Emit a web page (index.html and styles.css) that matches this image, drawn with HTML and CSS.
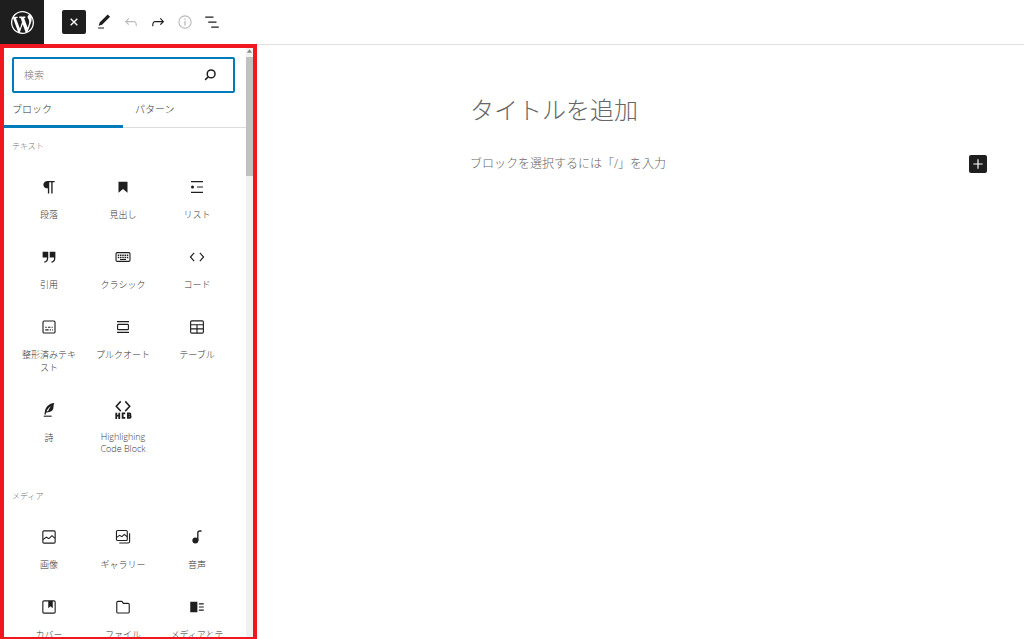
FILE: index.html
```html
<!DOCTYPE html>
<html lang="ja">
<head>
<meta charset="utf-8">
<title>投稿を編集</title>
<link rel="stylesheet" href="styles.css">
</head>
<body>
<header class="topbar">
  <a class="logo" href="#" aria-label="WordPress">
    <svg viewBox="0 0 20 20"><path d="M20 10c0-5.51-4.49-10-10-10C4.48 0 0 4.49 0 10c0 5.52 4.48 10 10 10 5.51 0 10-4.48 10-10zM7.78 15.37L4.37 6.22c.55-.02 1.17-.08 1.17-.08.5-.06.44-1.13-.06-1.11 0 0-1.45.11-2.37.11-.18 0-.37 0-.58-.01C4.12 2.69 6.87 1.11 10 1.11c2.33 0 4.45.87 6.05 2.34-.68-.11-1.65.39-1.65 1.58 0 .74.45 1.36.9 2.1.35.61.55 1.36.55 2.46 0 1.49-1.4 5-1.4 5l-3.03-8.37c.54-.02.82-.17.82-.17.5-.05.44-1.25-.06-1.22 0 0-1.44.12-2.38.12-.87 0-2.33-.12-2.33-.12-.5-.03-.56 1.2-.06 1.22l.92.08 1.26 3.41zM17.41 10c.24-.64.74-1.87.43-4.25.7 1.29 1.05 2.71 1.05 4.25 0 3.29-1.73 6.24-4.4 7.78.97-2.59 1.94-5.2 2.92-7.78zM6.1 18.09C3.12 16.65 1.11 13.53 1.11 10c0-1.3.23-2.48.72-3.59C3.25 10.3 4.67 14.2 6.1 18.09zm4.03-6.63l2.58 6.98c-.86.29-1.76.45-2.71.45-.79 0-1.57-.11-2.29-.33.81-2.38 1.62-4.74 2.42-7.1z"/></svg>
  </a>
  <div class="tools">
    <button class="tool close" aria-label="閉じる"><svg viewBox="0 0 24 24"><path class="line heavy" d="M7 7l10 10M17 7L7 17"/></svg></button>
    <button class="tool" aria-label="ツール"><svg viewBox="0 0 24 24"><path d="M20.100 5.100L16.900 2 6.200 12.700l-1.300 4.400 4.500-1.300L20.100 5.100zM4 20.800h8v-1.500H4v1.500z"/></svg></button>
    <button class="tool off" aria-label="元に戻す" disabled><svg viewBox="0 0 24 24"><path d="M18.300 11.700c-.6-.6-1.400-.9-2.300-.9H6.700l2.900-3.300-1.100-1-4.500 5L8.500 16l1-1-2.700-2.700H16c.5 0 .9.2 1.300.5 1 1 1 3.400 1 4.500v.3h1.500v-.2c0-1.500 0-4.300-1.500-5.700z"/></svg></button>
    <button class="tool" aria-label="やり直す"><svg viewBox="0 0 24 24"><path d="M15.600 6.500l-1.100 1 2.900 3.300H8c-.9 0-1.700.3-2.300.9-1.400 1.500-1.400 4.200-1.400 5.600v.2h1.500v-.3c0-1.100 0-3.500 1-4.500.3-.3.7-.5 1.300-.5h9.200L14.500 15l1.100 1.100 4.600-4.600-4.600-5z"/></svg></button>
    <button class="tool off" aria-label="詳細" disabled><svg viewBox="0 0 24 24"><circle class="line" cx="12" cy="12" r="8.200"/><path d="M11.100 7.300h1.800V9h-1.800zM11.100 10.700h1.800v6h-1.800z"/></svg></button>
    <button class="tool" aria-label="リスト表示"><svg viewBox="0 0 24 24"><path d="M3 4.500h11v1.700H3zM7 11.200h11v1.700H7zM11 17.900h10v1.700H11z"/></svg></button>
  </div>
</header>

<div class="workspace">
  <aside class="inserter">
    <div class="scroll">
      <div class="search">
        <input id="search" type="text" aria-label="検索" placeholder="検索" autofocus>
        <svg viewBox="0 0 24 24"><circle class="line heavy" cx="13.500" cy="10.500" r="5.200"/><path class="line heavy" d="M9.700 14.300L5.500 18.500"/></svg>
      </div>
      <div class="tabs" role="tablist">
        <button class="tab active" role="tab" aria-selected="true">ブロック</button>
        <button class="tab" role="tab" aria-selected="false">パターン</button>
      </div>

      <h2 class="group">テキスト</h2>
      <div class="blocks">
        <button class="block"><svg viewBox="0 0 24 24"><path d="M10.200 4C7 4 4.500 6 4.500 8.900s2.500 4.900 5.700 4.900h.3V20.500h1.800V5.500h2.700v15h1.800v-15H19.500V4z"/></svg><span>段落</span></button>
        <button class="block"><svg viewBox="0 0 24 24"><path d="M6 5v14.500l6-5 6 5V5z"/></svg><span>見出し</span></button>
        <button class="block"><svg viewBox="0 0 24 24"><path d="M4 4h16v1.600H4zM12 11.200h8v1.600h-8zM4 18.400h16V20H4z"/><circle cx="6" cy="12" r="2"/></svg><span>リスト</span></button>
        <button class="block"><svg viewBox="0 0 24 24"><path d="M3.500 5H11v8c0 4-1.700 6.200-5.300 6.700v-1.700c2.400-.5 3.600-2.200 3.600-5.500H3.500zM13 5h7.500v8c0 4-1.700 6.200-5.300 6.700v-1.700c2.400-.5 3.600-2.200 3.600-5.500H13z"/></svg><span>引用</span></button>
        <button class="block"><svg viewBox="0 0 24 24"><rect class="line" x="2.700" y="6.200" width="18.600" height="11.600" rx="1.500"/><path d="M5 8.500h2v2H5zM8 8.500h2v2H8zM11 8.500h2v2h-2zM14 8.500h2v2h-2zM17 8.500h2v2h-2zM5 11.500h2v2H5zM8 11.500h2v2H8zM11 11.500h2v2h-2zM14 11.500h2v2h-2zM17 11.500h2v2h-2zM8 14.500h8V16H8z"/></svg><span>クラシック</span></button>
        <button class="block"><svg viewBox="0 0 24 24"><path class="line" d="M8.200 6.500L3.200 12l5 5.500M15.800 6.500l5 5.500-5 5.500"/></svg><span>コード</span></button>
        <button class="block"><svg viewBox="0 0 24 24"><rect class="line" x="4" y="4" width="16" height="16" rx="1.500"/><path d="M7 11.500h2V13H7zM10.500 11.500H14V13h-3.500zM15.500 11.500H17V13h-1.500zM7 15h4.500v1.500H7zM13 15h1.500v1.500H13zM16 15h1v1.500h-1z"/></svg><span>整形済みテキスト</span></button>
        <button class="block"><svg viewBox="0 0 24 24"><path d="M4 4h16v1.600H4zM4 18.400h16V20H4z"/><rect class="line" x="4.800" y="8.500" width="14.400" height="7" rx="1"/></svg><span>プルクオート</span></button>
        <button class="block"><svg viewBox="0 0 24 24"><rect class="line" x="3.500" y="3.800" width="17" height="16.400" rx="1.500"/><path class="line" d="M4 9h16M4 14.500h16M12 9v11"/></svg><span>テーブル</span></button>
        <button class="block"><svg viewBox="0 0 24 24"><path d="M19 2.500C12 3 7.200 7.500 6.400 15l-.6 3h1.800l.7-2.700c5.700.2 8.800-1.800 9.500-5.500.3-2.100.2-4.800 1.200-7.300zM8.800 13.600c1.200-2.700 3-5 5.700-6.700-1.800 2.300-3 4.400-3.800 6.700z"/><path d="M5 19.500h10.500V21H5z"/></svg><span>詩</span></button>
        <button class="block latin"><svg viewBox="0 0 24 24"><path class="line heavy" d="M9 .5L3 7l6 6.500M15 .5L21 7l-6 6.500"/><path class="line bold" d="M3 15.500V24M7 15.500V24M3 19.500h4M15 16.500h-3.500v6H15M18.500 16.500h2.300c1.500 0 1.500 3 0 3h-2.300 2.500c1.700 0 1.700 3 0 3h-2.500z"/></svg><span>Highlighing Code Block</span></button>
      </div>

      <h2 class="group">メディア</h2>
      <div class="blocks">
        <button class="block"><svg viewBox="0 0 24 24"><rect class="line" x="3.800" y="3.800" width="16.400" height="16.400" rx="1.500"/><path class="line" d="M4 15.500l4.500-3.300 3.300 2 4.200-4 4 3.600"/></svg><span>画像</span></button>
        <button class="block"><svg viewBox="0 0 24 24"><rect class="line" x="3.300" y="3.300" width="14.400" height="13.400" rx="1.500"/><path class="line" d="M3.500 12.500l4-2.700 3 1.700 3.200-3 4 3.200M20.800 7v11c0 1.300-.7 2-2 2H7"/></svg><span>ギャラリー</span></button>
        <button class="block"><svg viewBox="0 0 24 24"><circle cx="9.800" cy="16.800" r="4"/><path d="M12.200 17V6.500c0-2.300 1.300-3.500 3.700-3.500H18v2h-2c-1.400 0-2 .6-2 1.800V17z"/></svg><span>音声</span></button>
        <button class="block"><svg viewBox="0 0 24 24"><rect class="line" x="3.800" y="3.800" width="16.400" height="16.400" rx="1.500"/><path d="M11 4h6v9.500l-3-2.400-3 2.400z"/></svg><span>カバー</span></button>
        <button class="block"><svg viewBox="0 0 24 24"><path class="line" d="M5.200 4.500h5.300l2 2.700h6.300c.8 0 1.500.6 1.500 1.500v9.800c0 .8-.7 1.500-1.500 1.500H5.200c-.8 0-1.500-.7-1.500-1.500V6c0-.9.700-1.500 1.500-1.500z"/></svg><span>ファイル</span></button>
        <button class="block"><svg viewBox="0 0 24 24"><path d="M3 5h9.500v14H3zM14.500 7H21v1.600h-6.500zM14.500 11.200H21v1.600h-6.500zM14.500 15.400H21V17h-6.500z"/></svg><span>メディアとテキスト</span></button>
      </div>
    </div>
    <div class="scrollbar"><svg viewBox="0 0 8 10"><path d="M1 7l3-4 3 4z"/></svg><div class="thumb"></div></div>
  </aside>

  <main class="canvas">
    <div class="post">
      <h1 class="title">タイトルを追加</h1>
      <p class="prompt">ブロックを選択するには「/」を入力</p>
    </div>
    <button class="add" aria-label="ブロックを追加"><svg viewBox="0 0 24 24"><path class="line heavy" d="M12 4v16M4 12h16"/></svg></button>
  </main>
</div>
</body>
</html>
```
FILE: styles.css
```css
* {
  box-sizing: border-box;
}

body {
  margin: 0;
  height: 100vh;
  display: flex;
  flex-direction: column;
  overflow: hidden;
  background: #fff;
  color: #1e1e1e;
  font-family: "Open Sans", "Noto Sans CJK JP", sans-serif;
  font-weight: 300;
}

button {
  margin: 0;
  padding: 0;
  border: 0;
  background: none;
  color: inherit;
  font: inherit;
}

svg {
  display: block;
  width: 18px;
  height: 18px;
  flex: none;
  overflow: visible;
  fill: currentColor;
}

.line {
  fill: none;
  stroke: currentColor;
  stroke-width: 1.5;
}

.heavy {
  stroke-width: 2;
}

.bold {
  stroke-width: 2.4;
}

.topbar {
  flex: none;
  display: flex;
  align-items: center;
  height: 45px;
  border-bottom: 1px solid #e0e0e0;
}

.logo {
  display: grid;
  place-items: center;
  width: 44px;
  height: 44px;
  background: #1e1e1e;
  color: #fff;
}

.logo svg {
  width: 23px;
  height: 23px;
}

.tools {
  display: flex;
  align-items: center;
  gap: 3px;
  padding-left: 18px;
}

.tool {
  display: grid;
  place-items: center;
  width: 24px;
  height: 24px;
}

.close {
  margin-right: 3px;
  border-radius: 2px;
  background: #1e1e1e;
  color: #fff;
}

.close svg {
  width: 16px;
  height: 16px;
}

.off {
  color: #bbb;
}

.workspace {
  flex: 1;
  min-height: 0;
  display: flex;
}

.inserter {
  position: relative;
  flex: none;
  display: flex;
  width: 257px;
  padding-right: 4px;
}

/* Highlight frame around the inserter */
.inserter::after {
  content: "";
  position: absolute;
  inset: -1px 0 0;
  border: solid #f01820;
  border-width: 4px 4px 2px;
  pointer-events: none;
}

.scroll {
  flex: 1;
  min-width: 0;
  overflow: hidden;
}

.search {
  display: flex;
  align-items: center;
  height: 36px;
  margin: 12px 11px 0 12px;
  padding: 0 14px 0 10px;
  border: 2px solid #007cba;
  border-radius: 2px;
}

.search input {
  flex: 1;
  min-width: 0;
  padding: 0;
  border: 0;
  outline: 0;
  background: none;
  font: inherit;
  font-size: 10px;
}

.search input::placeholder {
  color: #757575;
}

.tabs {
  display: flex;
  height: 35px;
  border-bottom: 1px solid #ddd;
}

.tab {
  flex: 1;
  height: 35px;
  padding: 0 12px 2px;
  border-bottom: 3px solid transparent;
  color: #333;
  font-size: 10px;
  text-align: left;
}

.active {
  border-color: #007cba;
}

.group {
  margin: 12px 12px 0;
  color: #757575;
  font-size: 8px;
  font-weight: 300;
  line-height: 12px;
}

.blocks {
  display: grid;
  grid-template-columns: repeat(3, 1fr);
  margin: 13px 12px 21px;
}

.block {
  display: flex;
  flex-direction: column;
  align-items: center;
  gap: 12px;
  min-height: 70px;
  padding: 13px 8px 14px;
  font-size: 9px;
  line-height: 13px;
}

.block span {
  color: #333;
}

.latin {
  line-height: 12px;
}

.scrollbar {
  flex: none;
  width: 7px;
  background: #f1f1f1;
  color: #888;
}

.scrollbar svg {
  width: 7px;
  height: 12px;
}

.thumb {
  height: 119px;
  background: #c1c1c1;
}

.canvas {
  flex: 1;
  display: flex;
  justify-content: flex-end;
  align-items: flex-start;
  padding: 45px 37px 0 0;
}

.post {
  flex: 1;
  max-width: 499px;
  color: #666;
}

.title {
  margin: 0;
  font-size: 24px;
  font-weight: 300;
  line-height: 40px;
}

.prompt {
  margin: 24px 0 0;
  font-size: 12px;
  line-height: 20px;
  text-spacing-trim: space-all;
}

.add {
  display: grid;
  place-items: center;
  width: 18px;
  height: 18px;
  margin-top: 65px;
  border-radius: 2px;
  background: #1e1e1e;
  color: #fff;
}

.add svg {
  width: 14px;
  height: 14px;
}
```
